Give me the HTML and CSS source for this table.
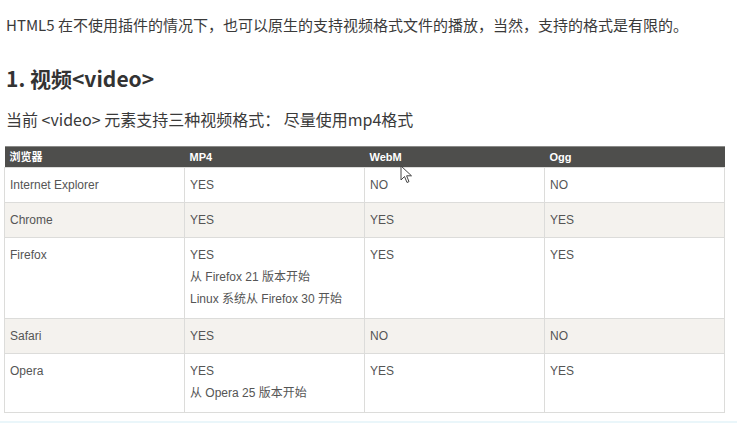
FILE: index.html
```html
<!DOCTYPE html>
<html lang="zh-CN">
<head>
<meta charset="utf-8">
<title>HTML5 视频</title>
<link rel="stylesheet" href="styles.css">
</head>
<body>
<main class="page">
  <p class="intro">HTML5 在不使用插件的情况下，也可以原生的支持视频格式文件的播放，当然，支持的格式是有限的。</p>
  <h2 class="title">1. 视频&lt;video&gt;</h2>
  <p class="lead">当前 &lt;video&gt; 元素支持三种视频格式： 尽量使用mp4格式</p>
  <table class="support">
    <thead>
      <tr><th>浏览器</th><th>MP4</th><th>WebM</th><th>Ogg</th></tr>
    </thead>
    <tbody>
      <tr><td>Internet Explorer</td><td>YES</td><td>NO</td><td>NO</td></tr>
      <tr class="alt"><td>Chrome</td><td>YES</td><td>YES</td><td>YES</td></tr>
      <tr class="multi"><td>Firefox</td><td>YES<br><span class="cn">从 Firefox 21 版本开始</span><br><span class="cn">Linux 系统从 Firefox 30 开始</span></td><td>YES</td><td>YES</td></tr>
      <tr class="alt"><td>Safari</td><td>YES</td><td>NO</td><td>NO</td></tr>
      <tr class="multi"><td>Opera</td><td>YES<br><span class="cn">从 Opera 25 版本开始</span></td><td>YES</td><td>YES</td></tr>
    </tbody>
  </table>
  <div class="rule"></div>
</main>
<svg class="cursor" width="14" height="20" viewBox="0 0 14 20"><path d="M1 1 L1 15 L4.5 11.5 L7 17.5 L9 16.6 L6.6 10.8 L11.5 10.8 Z" fill="#fff" stroke="#444" stroke-width="1" stroke-linejoin="round"/></svg>
</body>
</html>
```
FILE: styles.css
```css
html, body {
  margin: 0;
  padding: 0;
  background: #ffffff;
}
body {
  position: relative;
  width: 737px;
  height: 424px;
  overflow: hidden;
  font-family: "Noto Sans CJK SC", "Liberation Sans", sans-serif;
  color: #333;
}
.page {
  padding-top: 14px;
}
.intro {
  margin: 0;
  padding-left: 6px;
  font-size: 15px;
  line-height: 22px;
  color: #3a3a3a;
}
.title {
  margin: 27px 0 0;
  padding-left: 6px;
  font-size: 21px;
  line-height: 30px;
  font-weight: bold;
  color: #333;
}
.lead {
  margin: 15px 0 0;
  padding-left: 6px;
  font-size: 16px;
  line-height: 22px;
  color: #3a3a3a;
}
.support {
  margin: 16px 0 0 4px;
  width: 721px;
  border-collapse: collapse;
  table-layout: fixed;
  font-family: "Liberation Sans", "Noto Sans CJK SC", sans-serif;
  font-size: 12px;
  color: #555;
}
.support th {
  background: #4e4e4c;
  color: #fff;
  font-weight: bold;
  font-size: 11px;
  text-align: left;
  line-height: 20px;
  padding: 0 5px;
  border-top: 1px solid #8a8a88;
}
.support td {
  border: 1px solid #dcdcda;
  padding: 6px 5px;
  line-height: 22px;
  vertical-align: top;
}
.support tr.alt td {
  background: #f4f2ee;
}
.support tr.multi td {
  padding-bottom: 8px;
}
.cn {
  font-family: "Liberation Sans", "Noto Sans CJK SC", sans-serif;
}
.rule {
  margin-top: 8px;
  height: 2px;
  background: #eaf6fa;
}
.cursor {
  position: absolute;
  left: 400px;
  top: 165px;
}
```
